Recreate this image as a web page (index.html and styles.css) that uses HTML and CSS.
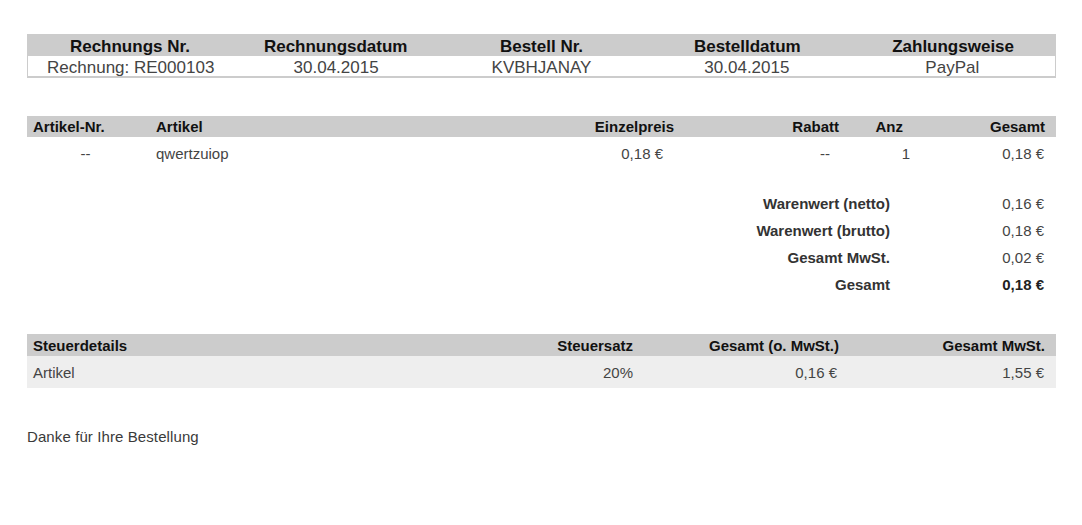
FILE: index.html
```html
<!DOCTYPE html>
<html lang="de">
<head>
<meta charset="utf-8">
<title>Rechnung RE000103</title>
<link rel="stylesheet" href="styles.css">
</head>
<body>
<div class="page">
  <div class="meta">
    <div class="meta-head">
      <div>Rechnungs Nr.</div>
      <div>Rechnungsdatum</div>
      <div>Bestell Nr.</div>
      <div>Bestelldatum</div>
      <div>Zahlungsweise</div>
    </div>
    <div class="meta-row">
      <div>Rechnung: RE000103</div>
      <div>30.04.2015</div>
      <div>KVBHJANAY</div>
      <div>30.04.2015</div>
      <div>PayPal</div>
    </div>
  </div>

  <div class="items">
    <div class="items-head">
      <div class="c-nr">Artikel-Nr.</div>
      <div class="c-art">Artikel</div>
      <div class="c-price">Einzelpreis</div>
      <div class="c-rab">Rabatt</div>
      <div class="c-anz">Anz</div>
      <div class="c-sum">Gesamt</div>
    </div>
    <div class="items-row">
      <div class="c-nr">--</div>
      <div class="c-art">qwertzuiop</div>
      <div class="c-price">0,18 €</div>
      <div class="c-rab">--</div>
      <div class="c-anz">1</div>
      <div class="c-sum">0,18 €</div>
    </div>
  </div>

  <div class="totals">
    <div class="t-label">Warenwert (netto)</div><div class="t-val">0,16 €</div>
    <div class="t-label">Warenwert (brutto)</div><div class="t-val">0,18 €</div>
    <div class="t-label">Gesamt MwSt.</div><div class="t-val">0,02 €</div>
    <div class="t-label">Gesamt</div><div class="t-val strong">0,18 €</div>
  </div>

  <div class="tax">
    <div class="tax-head">
      <div class="x-name">Steuerdetails</div>
      <div class="x-num">Steuersatz</div>
      <div class="x-num">Gesamt (o. MwSt.)</div>
      <div class="x-num x-last">Gesamt MwSt.</div>
    </div>
    <div class="tax-row">
      <div class="x-name">Artikel</div>
      <div class="x-num">20%</div>
      <div class="x-num x-v">0,16 €</div>
      <div class="x-num x-lastv">1,55 €</div>
    </div>
  </div>

  <p class="thanks">Danke für Ihre Bestellung</p>
</div>
</body>
</html>
```

FILE: styles.css
```css
* { box-sizing: border-box; }
html, body { margin: 0; padding: 0; background: #fff; }
body {
  font-family: "Liberation Sans", Arial, sans-serif;
  color: #3a3a3a;
}
.page {
  width: 1082px;
  padding: 34px 26px 0 27px;
}

/* top meta table */
.meta { width: 1029px; }
.meta-head, .meta-row {
  display: grid;
  grid-template-columns: repeat(5, 1fr);
  text-align: center;
  font-size: 17px;
}
.meta-head {
  background: #cccccc;
  color: #111;
  font-weight: bold;
  height: 22px;
  line-height: 25px;
}
.meta-row {
  height: 22px;
  line-height: 23px;
  border: 1px solid #cccccc;
  border-top: 0;
  border-bottom: 2px solid #cccccc;
  color: #444;
}

/* items table */
.items { margin-top: 38px; width: 1029px; }
.items-head, .items-row {
  display: grid;
  grid-template-columns: 123px 380px 150px 165px 85px 126px;
  font-size: 15px;
}
.items-head {
  background: #cccccc;
  color: #111;
  font-weight: bold;
  height: 21px;
  line-height: 21px;
}
.items-row {
  height: 34px;
  line-height: 34px;
  color: #444;
}
.c-nr { padding-left: 6px; }
.items-row .c-nr { padding-left: 0; text-align: center; padding-right: 6px; }
.c-art { padding-left: 6px; }
.c-price { text-align: right; padding-right: 6px; }
.items-row .c-price { padding-right: 17px; }
.c-rab { text-align: right; padding-right: 6px; }
.items-row .c-rab { padding-right: 15px; }
.c-anz { text-align: right; padding-right: 27px; }
.items-row .c-anz { padding-right: 20px; }
.c-sum { text-align: right; padding-right: 11px; }
.items-row .c-sum { padding-right: 12px; }

/* totals */
.totals {
  margin-top: 19px;
  width: 1029px;
  display: grid;
  grid-template-columns: 1fr 166px;
  grid-auto-rows: 27px;
  line-height: 27px;
  font-size: 15px;
}
.t-label { text-align: right; font-weight: bold; color: #333; }
.t-val { text-align: right; padding-right: 12px; color: #444; }
.t-val.strong { font-weight: bold; color: #222; }

/* tax table */
.tax { margin-top: 36px; width: 1029px; }
.tax-head, .tax-row {
  display: grid;
  grid-template-columns: 412px 200px 206px 211px;
  font-size: 15px;
}
.tax-head {
  background: #cccccc;
  color: #111;
  font-weight: bold;
  height: 22px;
  line-height: 23px;
}
.tax-row {
  background: #eeeeee;
  height: 32px;
  line-height: 33px;
  color: #444;
}
.x-name { padding-left: 6px; }
.x-num { text-align: right; padding-right: 6px; }
.x-v { padding-right: 8px; }
.x-last { padding-right: 11px; }
.x-lastv { padding-right: 12px; }

.thanks {
  margin: 40px 0 0;
  font-size: 15px;
  line-height: 18px;
  letter-spacing: 0.1px;
  color: #3a3a3a;
}
```
